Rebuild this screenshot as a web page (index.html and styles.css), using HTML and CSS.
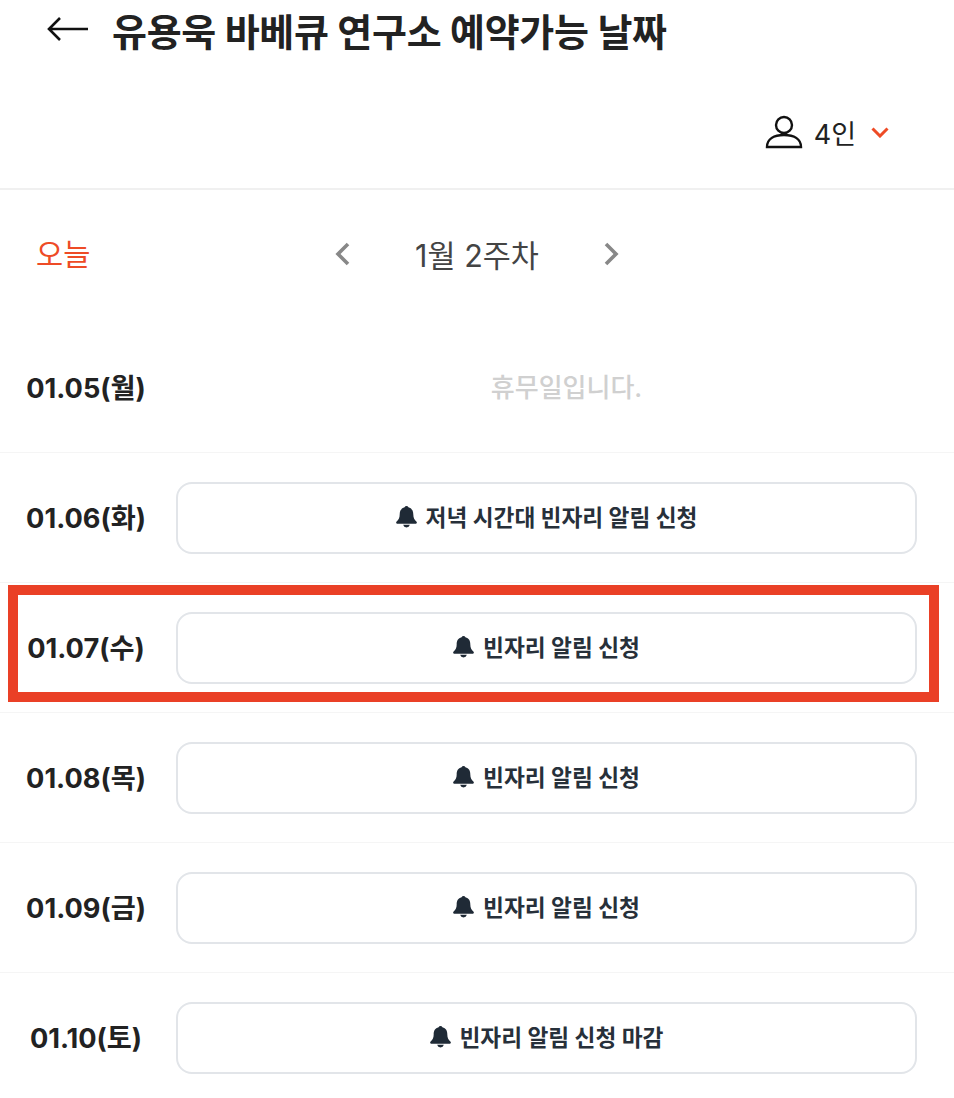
FILE: index.html
```html
<!DOCTYPE html>
<html lang="ko">
<head>
    <meta charset="UTF-8">
    <meta name="viewport" content="width=device-width, initial-scale=1.0">
    <title>유용욱 바베큐 연구소 예약가능 날짜</title>
    <link rel="stylesheet" href="styles.css">
</head>
<body>
    <header class="top-bar">
        <svg class="back-icon" width="42" height="26" viewBox="0 0 42 26" fill="none" stroke="#111" stroke-width="2.6">
            <path d="M41 13H2M13 2 2 13l11 11"/>
        </svg>
        <h1 class="page-title">유용욱 바베큐 연구소 예약가능 날짜</h1>
    </header>

    <div class="party-bar">
        <svg class="person-icon" width="38" height="34" viewBox="0 0 38 34" fill="none" stroke="#111" stroke-width="2.4">
            <circle cx="19" cy="10" r="8"/>
            <path d="M2 32c0-8 7-12 17-12s17 4 17 12zM1 32h36"/>
        </svg>
        <span class="party-size">4인</span>
        <svg class="caret-icon" width="18" height="11" viewBox="0 0 18 11" fill="none" stroke="#ee4b26" stroke-width="3">
            <path d="M1.500 1.500 9 9l7.500-7.500"/>
        </svg>
    </div>

    <div class="week-nav">
        <span class="today">오늘</span>
        <div class="week-picker">
            <svg width="16" height="24" viewBox="0 0 16 24" fill="none" stroke="#888" stroke-width="3.6"><path d="M14 2 4 12l10 10"/></svg>
            <span class="week-label">1월 2주차</span>
            <svg width="16" height="24" viewBox="0 0 16 24" fill="none" stroke="#888" stroke-width="3.6"><path d="M2 2l10 10L2 22"/></svg>
        </div>
    </div>

    <ul class="day-list">
        <li class="day-row">
            <span class="day-date">01.05(월)</span>
            <span class="day-closed">휴무일입니다.</span>
        </li>
        <li class="day-row">
            <span class="day-date">01.06(화)</span>
            <button class="alert-btn"><svg class="bell" width="21" height="22" viewBox="0 0 20 21"><path d="M10 0a2 2 0 0 1 1.800 1.300C15.200 2.200 16.500 4.800 16.500 8c0 3.300 1.100 5 3.100 7 .5.500.4 2-1 2H1.400c-1.400 0-1.500-1.500-1-2 2-2 3.100-3.700 3.100-7 0-3.200 1.300-5.800 4.700-6.700A2 2 0 0 1 10 0zM6.800 18h6.400a3.300 3.300 0 0 1-6.400 0z"/></svg>저녁 시간대 빈자리 알림 신청</button>
        </li>
        <li class="day-row">
            <span class="day-date">01.07(수)</span>
            <button class="alert-btn"><svg class="bell" width="21" height="22" viewBox="0 0 20 21"><path d="M10 0a2 2 0 0 1 1.800 1.300C15.200 2.200 16.500 4.800 16.500 8c0 3.300 1.100 5 3.100 7 .5.500.4 2-1 2H1.400c-1.400 0-1.500-1.500-1-2 2-2 3.100-3.700 3.100-7 0-3.200 1.300-5.800 4.700-6.700A2 2 0 0 1 10 0zM6.800 18h6.400a3.300 3.300 0 0 1-6.400 0z"/></svg>빈자리 알림 신청</button>
        </li>
        <li class="day-row">
            <span class="day-date">01.08(목)</span>
            <button class="alert-btn"><svg class="bell" width="21" height="22" viewBox="0 0 20 21"><path d="M10 0a2 2 0 0 1 1.800 1.300C15.200 2.200 16.500 4.800 16.500 8c0 3.300 1.100 5 3.100 7 .5.500.4 2-1 2H1.400c-1.400 0-1.500-1.500-1-2 2-2 3.100-3.700 3.100-7 0-3.200 1.300-5.800 4.700-6.700A2 2 0 0 1 10 0zM6.800 18h6.400a3.300 3.300 0 0 1-6.400 0z"/></svg>빈자리 알림 신청</button>
        </li>
        <li class="day-row">
            <span class="day-date">01.09(금)</span>
            <button class="alert-btn"><svg class="bell" width="21" height="22" viewBox="0 0 20 21"><path d="M10 0a2 2 0 0 1 1.800 1.300C15.200 2.200 16.500 4.800 16.500 8c0 3.300 1.100 5 3.100 7 .5.500.4 2-1 2H1.400c-1.400 0-1.500-1.500-1-2 2-2 3.100-3.700 3.100-7 0-3.200 1.300-5.800 4.700-6.700A2 2 0 0 1 10 0zM6.800 18h6.400a3.300 3.300 0 0 1-6.400 0z"/></svg>빈자리 알림 신청</button>
        </li>
        <li class="day-row">
            <span class="day-date">01.10(토)</span>
            <button class="alert-btn"><svg class="bell" width="21" height="22" viewBox="0 0 20 21"><path d="M10 0a2 2 0 0 1 1.800 1.300C15.200 2.200 16.500 4.800 16.500 8c0 3.300 1.100 5 3.100 7 .5.500.4 2-1 2H1.400c-1.400 0-1.500-1.500-1-2 2-2 3.100-3.700 3.100-7 0-3.200 1.300-5.800 4.700-6.700A2 2 0 0 1 10 0zM6.800 18h6.400a3.300 3.300 0 0 1-6.400 0z"/></svg>빈자리 알림 신청 마감</button>
        </li>
    </ul>

    <div class="highlight-frame"></div>
</body>
</html>
```

FILE: styles.css
```css
* {
    box-sizing: border-box;
}

html, body {
    height: 1098px;
    overflow: hidden;
}

body {
    position: relative;
    margin: 0;
    background: #fff;
    color: #222;
    font-family: 'Inter', 'Noto Sans CJK KR', sans-serif;
}

.top-bar {
    display: flex;
    align-items: center;
    gap: 23px;
    height: 60px;
    padding: 0 0 2px 47px;
}

.page-title {
    margin: 0;
    font-size: 38px;
    font-weight: 700;
    letter-spacing: -0.3px;
    white-space: nowrap;
    color: #222;
}

.party-bar {
    display: flex;
    align-items: center;
    justify-content: flex-end;
    height: 130px;
    padding: 16px 64px 0 0;
    border-bottom: 2px solid #f0f0f0;
}

.person-icon {
    margin-right: 11px;
}

.party-size {
    font-size: 27px;
    color: #222;
    margin-right: 15px;
}

.caret-icon {
    margin-right: 1px;
}

.week-nav {
    position: relative;
    display: flex;
    align-items: center;
    height: 133px;
    padding: 0 0 9px 36px;
}

.today {
    font-size: 29.500px;
    color: #ee4b26;
}

.week-picker {
    position: absolute;
    left: 0;
    right: 0;
    top: 0;
    bottom: 6px;
    display: flex;
    justify-content: center;
    align-items: center;
    gap: 65px;
}

.week-label {
    font-size: 30.500px;
    color: #444;
}

.day-list {
    list-style: none;
    margin: 0;
    padding: 0;
}

.day-row {
    display: flex;
    align-items: center;
    height: 130px;
    padding: 0 37px 0 26px;
    border-bottom: 1px solid #f5f5f5;
}

.day-date {
    flex: 0 0 120px;
    margin-right: 30px;
    padding-bottom: 3px;
    font-size: 27.200px;
    font-weight: 700;
    white-space: nowrap;
    text-align: center;
    color: #222;
}

.day-closed {
    flex: 1;
    padding: 0 0 4px 40px;
    text-align: center;
    font-size: 26px;
    font-weight: 500;
    color: #d0d0d0;
}

.alert-btn {
    flex: 1;
    display: flex;
    align-items: center;
    justify-content: center;
    gap: 9px;
    height: 72px;
    padding-bottom: 3px;
    background: #fff;
    border: 2px solid #e2e5e9;
    border-radius: 16px;
    font-family: inherit;
    font-size: 22.700px;
    font-weight: 700;
    color: #27303a;
}

.bell {
    fill: #1f2a36;
}

.highlight-frame {
    position: absolute;
    left: 8px;
    top: 585px;
    width: 931px;
    height: 117px;
    border: 10px solid #ea4026;
}
```
